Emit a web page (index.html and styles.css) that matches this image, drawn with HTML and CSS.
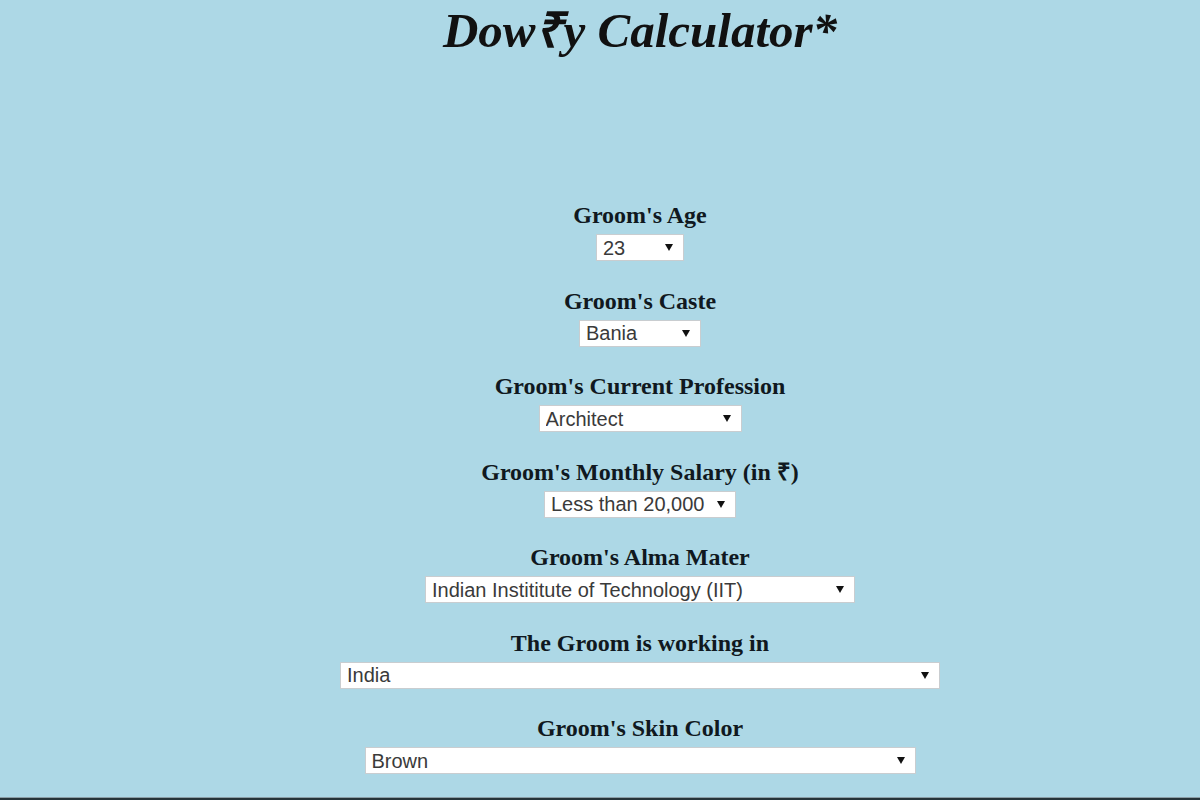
FILE: index.html
```html
<!DOCTYPE html>
<html lang="en">
<head>
    <meta charset="UTF-8">
    <meta name="viewport" content="width=device-width, initial-scale=1.0">
    <title>Dowry Calculator</title>
    <link rel="stylesheet" href="styles.css">
</head>
<body>
  <div class="page">
    <h1 class="title">Dow&#8377;y Calculator*</h1>

    <form class="calc">
      <div class="field">
        <label class="field-label" for="age">Groom's Age</label>
        <div class="pick pick-age">
          <select id="age">
            <option>23</option>
            <option>24</option>
            <option>25</option>
            <option>26</option>
            <option>27</option>
            <option>28</option>
          </select>
        </div>
      </div>

      <div class="field">
        <label class="field-label" for="caste">Groom's Caste</label>
        <div class="pick pick-caste">
          <select id="caste">
            <option>Bania</option>
            <option>Brahmin</option>
            <option>Kshatriya</option>
          </select>
        </div>
      </div>

      <div class="field">
        <label class="field-label" for="profession">Groom's Current Profession</label>
        <div class="pick pick-profession">
          <select id="profession">
            <option>Architect</option>
            <option>Doctor</option>
            <option>Engineer</option>
          </select>
        </div>
      </div>

      <div class="field">
        <label class="field-label" for="salary">Groom's Monthly Salary (in &#8377;)</label>
        <div class="pick pick-salary">
          <select id="salary">
            <option>Less than 20,000</option>
            <option>20,000 - 50,000</option>
            <option>More than 50,000</option>
          </select>
        </div>
      </div>

      <div class="field">
        <label class="field-label" for="college">Groom's Alma Mater</label>
        <div class="pick pick-college">
          <select id="college">
            <option>Indian Instititute of Technology (IIT)</option>
            <option>Indian Institute of Management (IIM)</option>
          </select>
        </div>
      </div>

      <div class="field">
        <label class="field-label" for="country">The Groom is working in</label>
        <div class="pick pick-country">
          <select id="country">
            <option>India</option>
            <option>USA</option>
          </select>
        </div>
      </div>

      <div class="field">
        <label class="field-label" for="skin">Groom's Skin Color</label>
        <div class="pick pick-skin">
          <select id="skin">
            <option>Brown</option>
            <option>Fair</option>
            <option>Dark</option>
          </select>
        </div>
      </div>
    </form>
  </div>

  <div class="page-edge"></div>
</body>
</html>
```

FILE: styles.css
```css
body{
  margin: 0;
  background-color: lightblue;
  font-family: "Liberation Serif", "Times New Roman", serif;
  color: #101820;
}
.page{
  padding-left: 80px;
}
.title{
  margin: 0;
  padding-top: 6px;
  text-align: center;
  font-size: 49px;
  line-height: 50px;
  font-style: italic;
  font-weight: bold;
  color: #111;
}
.calc{
  display: flex;
  flex-direction: column;
  align-items: center;
  gap: 26.5px;
  margin-top: 146px;
}
.field{
  display: flex;
  flex-direction: column;
  align-items: center;
  gap: 6px;
}
.field-label{
  font-size: 24px;
  line-height: 26px;
  font-weight: bold;
}
.pick{
  position: relative;
}
.pick select{
  -webkit-appearance: none;
  appearance: none;
  display: block;
  width: 100%;
  height: 27px;
  margin: 0;
  padding: 0 26px 0 6px;
  border: 1px solid #c9cdd0;
  border-radius: 0;
  background-color: #fff;
  font-family: "Liberation Sans", Arial, sans-serif;
  font-size: 20px;
  color: #3a3a3a;
}
/* the little drop arrow */
.pick::after{
  content: "";
  position: absolute;
  right: 11px;
  top: 10px;
  border-left: 4px solid transparent;
  border-right: 4px solid transparent;
  border-top: 7px solid #111;
  pointer-events: none;
}
.pick-age{ width: 88px; }
.pick-caste{ width: 122px; }
.pick-profession{ width: 203px; }
.pick-salary{ width: 192px; }
.pick-college{ width: 430px; }
.pick-country{ width: 600px; }
.pick-skin{ width: 551px; }

.page-edge{
  margin-top: 23px;
  height: 3px;
  border-top: 1px solid #8a9ea6;
  background-color: #26343a;
}
```
